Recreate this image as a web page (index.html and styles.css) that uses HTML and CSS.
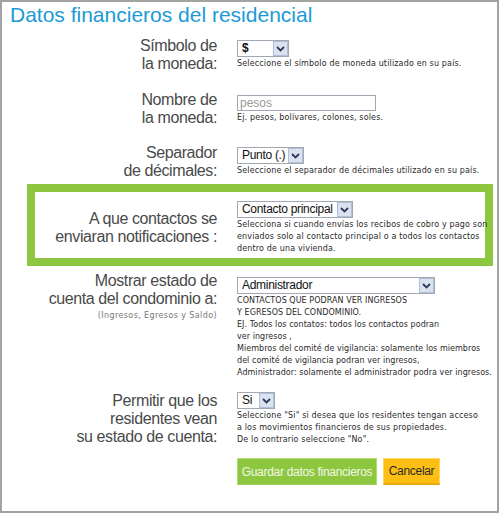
FILE: index.html
```html
<!DOCTYPE html>
<html lang="es">
<head>
  <meta charset="UTF-8" />
  <title>Datos financieros del residencial</title>
  <link rel="stylesheet" href="styles.css">
</head>
<body>

  <div class="page">
    <h1 class="title">Datos financieros del residencial</h1>

    <form class="form">
      <div class="row">
        <label class="label">Símbolo de<br>la moneda:</label>
        <div class="field">
          <span class="select select-symbol">
            <select><option>$</option></select>
            <span class="arrow"><svg width="9" height="6" viewBox="0 0 9 6"><polyline points="1,1 4.5,4.5 8,1" fill="none" stroke="#2d3a5a" stroke-width="1.8"/></svg></span>
          </span>
          <p class="help">Seleccione el símbolo de moneda utilizado en su país.</p>
        </div>
      </div>

      <div class="row row-name">
        <label class="label">Nombre de<br>la moneda:</label>
        <div class="field">
          <input class="text-input" type="text" placeholder="pesos">
          <p class="help">Ej. pesos, bolívares, colones, soles.</p>
        </div>
      </div>

      <div class="row row-separator">
        <label class="label">Separador<br>de décimales:</label>
        <div class="field">
          <span class="select select-separator">
            <select><option>Punto (.)</option><option>Coma (,)</option></select>
            <span class="arrow"><svg width="9" height="6" viewBox="0 0 9 6"><polyline points="1,1 4.5,4.5 8,1" fill="none" stroke="#2d3a5a" stroke-width="1.8"/></svg></span>
          </span>
          <p class="help">Seleccione el separador de décimales utilizado en su país.</p>
        </div>
      </div>

      <div class="row row-highlight">
        <label class="label">A que contactos se<br>enviaran notificaciones :</label>
        <div class="field">
          <span class="select select-contacts">
            <select><option>Contacto principal</option><option>Todos los contactos</option></select>
            <span class="arrow"><svg width="9" height="6" viewBox="0 0 9 6"><polyline points="1,1 4.5,4.5 8,1" fill="none" stroke="#2d3a5a" stroke-width="1.8"/></svg></span>
          </span>
          <p class="help">Selecciona si cuando envías los recibos de cobro y pago son<br>enviados solo al contacto principal o a todos los contactos<br>dentro de una vivienda.</p>
        </div>
      </div>

      <div class="row row-top row-statement">
        <label class="label">Mostrar estado de<br>cuenta del condominio a:<span class="label-note">(Ingresos, Egresos y Saldo)</span></label>
        <div class="field">
          <span class="select select-admin">
            <select><option>Administrador</option><option>Todos los contactos</option></select>
            <span class="arrow"><svg width="9" height="6" viewBox="0 0 9 6"><polyline points="1,1 4.5,4.5 8,1" fill="none" stroke="#2d3a5a" stroke-width="1.8"/></svg></span>
          </span>
          <p class="help help-list">CONTACTOS QUE PODRAN VER INGRESOS<br>Y EGRESOS DEL CONDOMINIO.<br>EJ. Todos los contatos: todos los contactos podran<br>ver ingresos ,<br>Miembros del comité de vigilancia: solamente los miembros<br>del comité de vigilancia podran ver ingresos,<br>Administrador: solamente el administrador podra ver ingresos.</p>
        </div>
      </div>

      <div class="row row-residents">
        <label class="label">Permitir que los<br>residentes vean<br>su estado de cuenta:</label>
        <div class="field">
          <span class="select select-yesno">
            <select><option>Si</option><option>No</option></select>
            <span class="arrow"><svg width="9" height="6" viewBox="0 0 9 6"><polyline points="1,1 4.5,4.5 8,1" fill="none" stroke="#2d3a5a" stroke-width="1.8"/></svg></span>
          </span>
          <p class="help">Seleccione "Si" si desea que los residentes tengan acceso<br>a los movimientos financieros de sus propiedades.<br>De lo contrario seleccione "No".</p>
        </div>
      </div>

      <div class="actions">
        <button type="button" class="btn btn-save">Guardar datos financieros</button>
        <button type="button" class="btn btn-cancel">Cancelar</button>
      </div>
    </form>
  </div>

</body>
</html>
```

FILE: styles.css
```css
* {
  margin: 0;
  padding: 0;
  box-sizing: border-box;
}

body {
  font-family: 'Liberation Sans', Arial, sans-serif;
  background: #fff;
  color: #222;
}

.page {
  width: 499px;
  height: 513px;
  border: 2px solid #a3a3a3;
  background: #fff;
}

.title {
  font-size: 21px;
  font-weight: normal;
  line-height: 24px;
  color: #1b9ad6;
  padding: 1px 0 0 8px;
}

.form {
  width: 466px;
  margin-left: 25px;
}

.row {
  display: grid;
  grid-template-columns: 182px 1fr;
  column-gap: 20px;
  align-items: center;
  padding: 0 8px;
  margin-top: 18px;
}

.row:first-child {
  margin-top: 10px;
}

.row-separator {
  margin-top: 17px;
}

.row-highlight {
  margin-top: 4px;
  border: 8px solid #8dc63f;
  padding: 9px 0 3px;
}

.row-top {
  align-items: start;
}

.row-statement {
  margin-top: 6px;
}

.row-statement .field {
  margin-top: 5px;
}

.row-residents {
  margin-top: 13px;
}

.label {
  display: block;
  text-align: right;
  font-size: 16px;
  letter-spacing: -0.4px;
  line-height: 18px;
  color: #4a4a4a;
}

.label-note {
  display: block;
  margin-top: 2px;
  font-family: 'DejaVu Sans', Verdana, sans-serif;
  font-size: 8px;
  letter-spacing: 0.4px;
  line-height: 12px;
  color: #777;
}

.field {
  min-width: 0;
}

.select {
  display: flex;
  align-items: center;
  height: 17px;
  border: 1px solid #a0a8b4;
  background: #fff;
}

.select select {
  flex: 1;
  min-width: 0;
  height: 15px;
  border: none;
  background: #fff;
  appearance: none;
  -webkit-appearance: none;
  font-family: 'Liberation Sans', Arial, sans-serif;
  font-size: 12px;
  letter-spacing: -0.3px;
  line-height: 15px;
  color: #111;
  padding: 0 0 0 4px;
}

.arrow {
  display: flex;
  align-items: center;
  justify-content: center;
  width: 15px;
  height: 15px;
  background: #dbe2ef;
  border: 1px solid #b3bfd6;
}

.select-symbol { width: 52px; }
.select-symbol select { font-weight: bold; letter-spacing: 0; }
.select-separator { width: 67px; }
.select-contacts { width: 116px; }
.select-admin { width: 198px; }
.select-yesno { width: 38px; }

.text-input {
  display: block;
  width: 139px;
  height: 16px;
  border: 1px solid #a0a8b4;
  font-family: 'Liberation Sans', Arial, sans-serif;
  font-size: 12px;
  padding: 0 2px;
  color: #333;
}

.text-input::placeholder {
  color: #999;
}

.help {
  margin-top: 1px;
  font-family: 'DejaVu Sans', Verdana, sans-serif;
  font-size: 8px;
  letter-spacing: 0.15px;
  line-height: 12px;
  color: #2a2a2a;
  white-space: nowrap;
}

.help-list {
  letter-spacing: 0.05px;
}

.actions {
  display: flex;
  gap: 6px;
  padding-left: 210px;
  margin-top: 12px;
}

.btn {
  height: 27px;
  font-family: 'Liberation Sans', Arial, sans-serif;
  font-size: 12px;
  letter-spacing: -0.3px;
  cursor: pointer;
}

.btn-save {
  width: 140px;
  background: #8dc63f;
  color: #f1f8e6;
  border: 1px solid #b0db74;
  border-bottom-color: #9fd05a;
}

.btn-cancel {
  width: 57px;
  background: #fdbf12;
  color: #2a2a2a;
  border: 1px solid #ffd766;
  border-bottom: 2px solid #e6ac10;
}
```
